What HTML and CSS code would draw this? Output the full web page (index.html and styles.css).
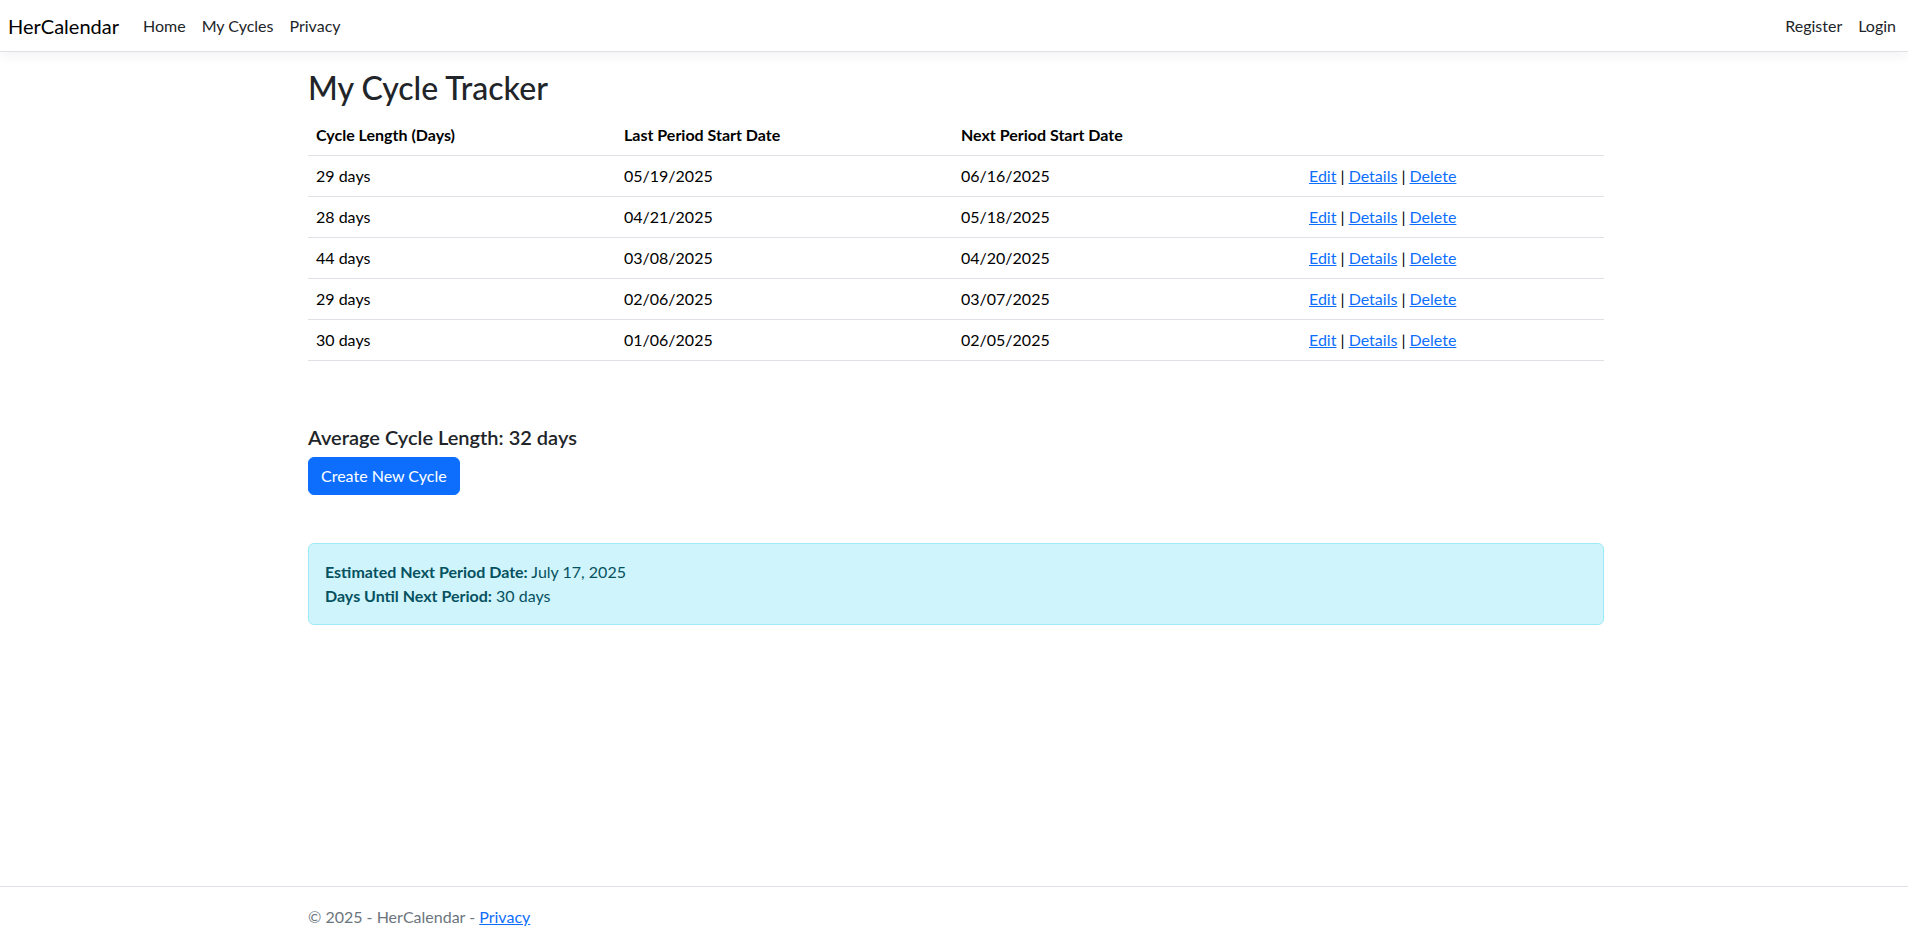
FILE: index.html
```html
<!DOCTYPE html>
<html lang="en">
<head>
<meta charset="utf-8">
<title>My Cycle Tracker - HerCalendar</title>
<link rel="stylesheet" href="styles.css">
</head>
<body>
<header class="navbar">
  <div class="nav-inner">
    <a class="brand" href="#">HerCalendar</a>
    <ul class="nav-list grow">
      <li><a class="nav-link" href="#">Home</a></li>
      <li><a class="nav-link" href="#">My Cycles</a></li>
      <li><a class="nav-link" href="#">Privacy</a></li>
    </ul>
    <ul class="nav-list">
      <li><a class="nav-link" href="#">Register</a></li>
      <li><a class="nav-link" href="#">Login</a></li>
    </ul>
  </div>
</header>
<main class="container main">
  <h2 class="title">My Cycle Tracker</h2>
  <table class="table">
    <thead>
      <tr>
        <th class="c1">Cycle Length (Days)</th>
        <th class="c2">Last Period Start Date</th>
        <th class="c3">Next Period Start Date</th>
        <th class="c4"></th>
      </tr>
    </thead>
    <tbody>
      <tr><td>29 days</td><td>05/19/2025</td><td>06/16/2025</td><td><a href="#">Edit</a> | <a href="#">Details</a> | <a href="#">Delete</a></td></tr>
      <tr><td>28 days</td><td>04/21/2025</td><td>05/18/2025</td><td><a href="#">Edit</a> | <a href="#">Details</a> | <a href="#">Delete</a></td></tr>
      <tr><td>44 days</td><td>03/08/2025</td><td>04/20/2025</td><td><a href="#">Edit</a> | <a href="#">Details</a> | <a href="#">Delete</a></td></tr>
      <tr><td>29 days</td><td>02/06/2025</td><td>03/07/2025</td><td><a href="#">Edit</a> | <a href="#">Details</a> | <a href="#">Delete</a></td></tr>
      <tr><td>30 days</td><td>01/06/2025</td><td>02/05/2025</td><td><a href="#">Edit</a> | <a href="#">Details</a> | <a href="#">Delete</a></td></tr>
    </tbody>
  </table>
  <h5 class="avg">Average Cycle Length: 32 days</h5>
  <a class="btn" href="#">Create New Cycle</a>
  <div class="alert">
    <strong>Estimated Next Period Date:</strong> July 17, 2025<br>
    <strong>Days Until Next Period:</strong> 30 days
  </div>
</main>
<footer class="footer">
  <div class="container">&copy; 2025 - HerCalendar - <a href="#">Privacy</a></div>
</footer>
</body>
</html>
```
FILE: styles.css
```css
* { box-sizing: border-box; }
html, body { margin: 0; padding: 0; }
body {
  font-family: "Segoe UI", Lato, "Liberation Sans", sans-serif;
  font-size: 16px;
  line-height: 1.5;
  color: #212529;
  background: #fff;
  min-height: 100vh;
  display: flex;
  flex-direction: column;
}
a { color: #0d6efd; text-decoration: underline; }

.navbar {
  background: #fff;
  border-bottom: 1px solid #dee2e6;
  box-shadow: 0 4px 12px rgba(0,0,0,.05);
  height: 52px;
}
.nav-inner {
  display: flex;
  align-items: center;
  height: 51px;
  padding: 0 4px 0 8px;
}
.brand {
  font-size: 20px;
  line-height: 30px;
  color: #000;
  text-decoration: none;
  margin-right: 16px;
}
.nav-list {
  list-style: none;
  margin: 0;
  padding: 0;
  display: flex;
}
.nav-list.grow { flex-grow: 1; }
.nav-link {
  display: block;
  padding: 0 8px;
  line-height: 24px;
  color: #212529;
  text-decoration: none;
}

.container {
  width: 100%;
  max-width: 1320px;
  margin: 0 auto;
  padding: 0 10px 0 14px;
}
.main { margin-top: 17px; }

.title {
  font-size: 32px;
  font-weight: 500;
  line-height: 1.2;
  margin: 0 0 8px;
}

.table {
  width: 100%;
  border-collapse: collapse;
  table-layout: fixed;
  margin-bottom: 16px;
  color: #000;
}
.table th, .table td {
  padding: 8px;
  line-height: 24px;
  border-bottom: 1px solid #dee2e6;
  text-align: left;
  vertical-align: top;
}
.table th { font-weight: 700; }
.c1 { width: 308px; }
.c2 { width: 337px; }
.c3 { width: 348px; }

.avg {
  font-size: 20px;
  font-weight: 600;
  line-height: 1.2;
  margin: 64px 0 8px;
}

.btn {
  display: inline-block;
  background: #0d6efd;
  border: 1px solid #0d6efd;
  color: #fff;
  text-decoration: none;
  padding: 6px 12px;
  line-height: 24px;
  border-radius: 6px;
}

.alert {
  margin-top: 48px;
  padding: 16px;
  background: #cff4fc;
  border: 1px solid #9eeaf9;
  border-radius: 6px;
  color: #055160;
  line-height: 24px;
}
.alert strong { font-weight: 700; }

.footer {
  margin-top: auto;
  border-top: 1px solid #dee2e6;
  line-height: 60px;
  color: #6c757d;
  white-space: nowrap;
}
```
